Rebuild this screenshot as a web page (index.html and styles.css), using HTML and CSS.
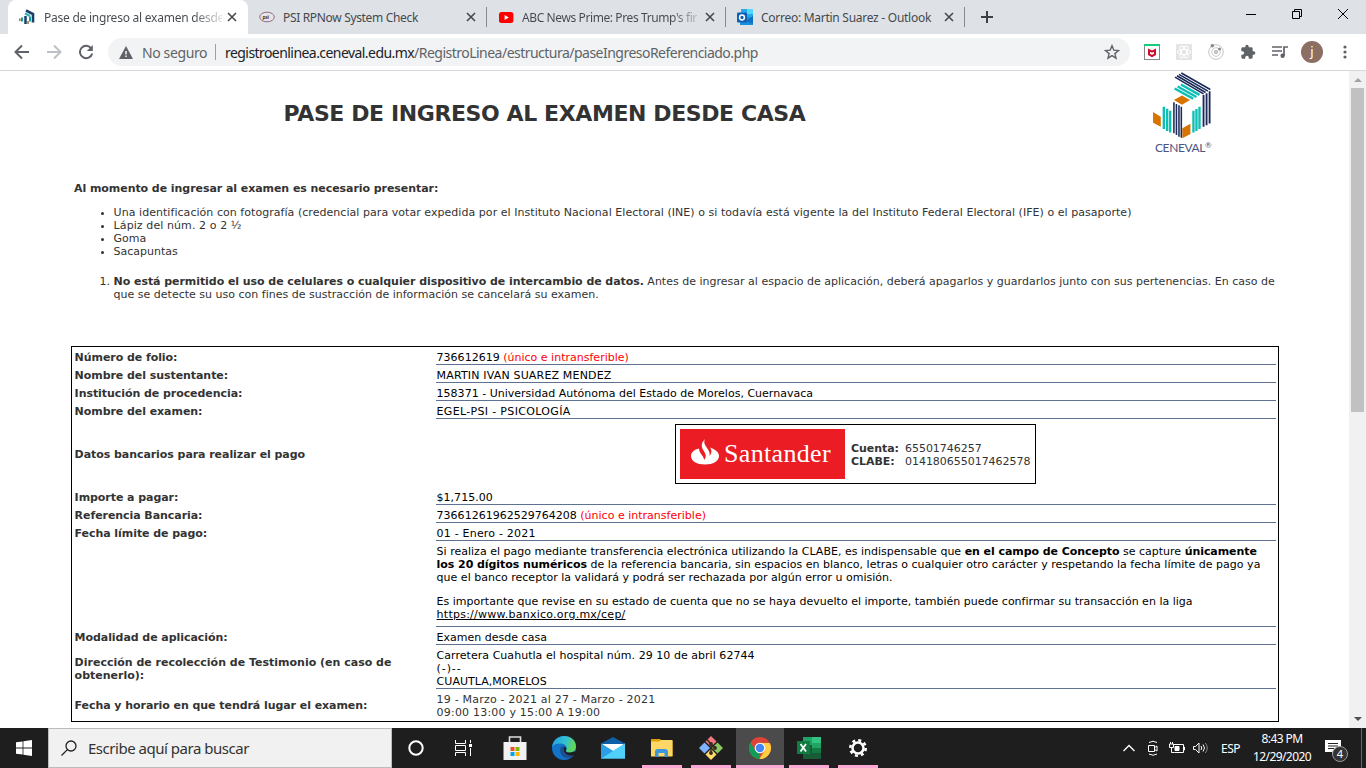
FILE: index.html
```html
<!DOCTYPE html>
<html lang="es">
<head>
<meta charset="utf-8">
<title>Pase de ingreso al examen desde casa</title>
<link rel="stylesheet" href="styles.css">
</head>
<body>
<div class="screen">
<header class="tabstrip">
  <div class="tab tab-active">
    <svg class="favicon" viewBox="0 0 16 16"><path d="M7 1.500L14 5v8.500" fill="none" stroke="#1b3f66" stroke-width="2.600"/><path d="M6 4.500l5 2.500" stroke="#2ab5b5" stroke-width="2"/><path d="M11 7.500v5M3 8.500v4" stroke="#0e9fa8" stroke-width="2"/><path d="M6.500 7v8" stroke="#1b3f66" stroke-width="2.500"/><path d="M.8 9.500v2.500M9 12v3" stroke="#a87a3c" stroke-width="1.600"/></svg>
    <span class="tab-title fade">Pase de ingreso al examen desde</span>
    <svg class="close" viewBox="0 0 10 10"><path d="M1 1l8 8M9 1l-8 8"/></svg>
  </div>
  <div class="tab tab-psi">
    <svg class="favicon" viewBox="0 0 16 16"><ellipse cx="8" cy="8" rx="7.300" ry="4.800" fill="#e9e4ea" stroke="#8b6d80"/><text x="3.500" y="10" class="psi-text">psi</text></svg>
    <span class="tab-title">PSI RPNow System Check</span>
    <svg class="close" viewBox="0 0 10 10"><path d="M1 1l8 8M9 1l-8 8"/></svg>
  </div>
  <div class="tab tab-yt">
    <svg class="favicon" viewBox="0 0 16 16"><rect x="1" y="3" width="14.400" height="11" rx="2.500" fill="#f00"/><path d="M6.600 6v5l4.200-2.500z" fill="#fff"/></svg>
    <span class="tab-title fade">ABC News Prime: Pres Trump's fir</span>
    <svg class="close" viewBox="0 0 10 10"><path d="M1 1l8 8M9 1l-8 8"/></svg>
  </div>
  <div class="tab tab-mail">
    <svg class="favicon" viewBox="0 0 16 16"><path d="M4 0h12v9H4z" fill="#28a8ea"/><path d="M10 0h6v5h-6z" fill="#50d9ff"/><path d="M4 4h6v5H4z" fill="#0364b8"/><path d="M3 8h13v8H3z" fill="#1490df"/><path d="M9 12l7-5v8z" fill="#0f6fc0"/><rect y="3.500" width="10" height="10" rx="1" fill="#0f5fb5"/><circle cx="5" cy="8.500" r="2.400" fill="none" stroke="#fff" stroke-width="1.500"/></svg>
    <span class="tab-title">Correo: Martin Suarez - Outlook</span>
    <svg class="close" viewBox="0 0 10 10"><path d="M1 1l8 8M9 1l-8 8"/></svg>
  </div>
  <svg class="newtab" viewBox="0 0 12 12"><path d="M6 0v12M0 6h12"/></svg>
  <div class="winbtns">
    <svg viewBox="0 0 12 12"><path d="M1 6.500h10"/></svg>
    <svg viewBox="0 0 12 12"><path d="M1.500 3.500h7v7h-7zM3.500 3.500v-2h7v7h-2"/></svg>
    <svg viewBox="0 0 12 12"><path d="M1 1l10 10M11 1L1 11"/></svg>
  </div>
</header>
<nav class="toolbar">
  <svg class="nav-ico" viewBox="0 0 16 16"><path d="M15 8H2M8 1.500L1.500 8L8 14.500"/></svg>
  <svg class="nav-ico off" viewBox="0 0 16 16"><path d="M1 8h13M8 1.500L14.500 8L8 14.500"/></svg>
  <svg class="nav-ico" viewBox="0 0 16 16"><path d="M13.300 4.500A6.200 6.200 0 1 0 14.200 9.500"/><path d="M14.800 1v6h-6z" class="solid"/></svg>
  <div class="omnibox">
    <svg class="warn" viewBox="0 0 14 13"><path d="M7 0l7 13H0z" fill="#5f6368"/><path d="M7 5v3.500M7 9.500v1.500" stroke="#fff" stroke-width="1.400"/></svg>
    <span class="unsafe">No seguro</span>
    <i class="bar"></i>
    <span class="url"><b>registroenlinea.ceneval.edu.mx</b>/RegistroLinea/estructura/paseIngresoReferenciado.php</span>
    <svg class="star" viewBox="0 0 16 16"><path d="M8 1.700l1.800 4.400 4.700.4-3.600 3.100 1.100 4.600L8 11.700l-4 2.500 1.100-4.600L1.500 6.500l4.700-.4z"/></svg>
  </div>
  <div class="exts">
    <svg viewBox="0 0 16 16"><rect x=".5" y=".5" width="15" height="15" fill="#fff" stroke="#888"/><path d="M0 0h16v2H0z" fill="#0fce7c"/><path d="M4 4.500l4 2 4-2v6.500l-4 2.300-4-2.300z" fill="#c8102e"/><path d="M6 7.800l2 1 2-1v2l-2 1-2-1z" fill="#fff"/></svg>
    <svg viewBox="0 0 16 16"><rect width="16" height="16" fill="#e4e4e4"/><g fill="none" stroke="#fff"><ellipse cx="8" cy="8" rx="6.500" ry="2.600"/><ellipse cx="8" cy="8" rx="6.500" ry="2.600" transform="rotate(60 8 8)"/><ellipse cx="8" cy="8" rx="6.500" ry="2.600" transform="rotate(120 8 8)"/></g></svg>
    <svg viewBox="0 0 16 16"><circle cx="8" cy="8" r="7.300" fill="none" stroke="#c4c4c4"/><circle cx="8" cy="8" r="4.300" fill="none" stroke="#ccc"/><circle cx="8" cy="8" r="2.200" fill="#c4c4c4"/><circle cx="4.300" cy="1.800" r="1.800" fill="#888"/><circle cx="11.500" cy="5" r="1.500" fill="#888"/></svg>
    <svg viewBox="0 0 24 24"><path fill="#5f6368" d="M20.500 11H19V7c0-1.100-.9-2-2-2h-4V3.500a2.500 2.500 0 0 0-5 0V5H4c-1.100 0-2 .9-2 2v3.800h1.500a2.700 2.700 0 0 1 0 5.400H2V20c0 1.100.9 2 2 2h3.800v-1.500a2.700 2.700 0 0 1 5.400 0V22H17c1.100 0 2-.9 2-2v-4h1.500a2.500 2.500 0 0 0 0-5z"/></svg>
    <svg viewBox="0 0 16 16"><path d="M0 3h10M0 7h10M0 11h6" stroke="#5f6368" stroke-width="1.700"/><circle cx="10.600" cy="11.800" r="2.200" fill="#5f6368"/><path d="M12 12V3h4" stroke="#5f6368" stroke-width="1.700" fill="none"/></svg>
  </div>
  <span class="avatar">j</span>
  <svg class="dots" viewBox="0 0 4 14"><circle cx="2" cy="2" r="1.600"/><circle cx="2" cy="7" r="1.600"/><circle cx="2" cy="12" r="1.600"/></svg>
</nav>
<div class="viewport">
<main class="page">
  <div class="head">
    <h1>PASE DE INGRESO AL EXAMEN DESDE CASA</h1>
    <div class="logo">
      <svg viewBox="450 215 190 205">
        <path class="navy" stroke-width="4.600" d="M543 221l86 49M536 225l86 50M530 229l85 50M524 233l85 50"/>
        <path class="teal" stroke-width="7" d="M542 255l55 31M532 261l56 31M523 267l55 30"/>
        <path class="orange" d="M545 288l24 13-24 14-24-14zM459 337l23 14v30l-23-12zM546 385l24-13v30l-24 13z"/>
        <path class="navy" stroke-width="5.500" d="M609 286v95M618 281v95M627 275v96"/>
        <path class="navy" stroke-width="4.600" d="M521 308v92M528.500 313v92M536 317v93M543 321v92"/>
        <path class="teal" stroke-width="7" d="M491 321v66M501 327v66M510 333v65M579 333v65M588 328v65M597 321v66"/>
      </svg>
      <span class="logo-name">CENEVAL<sup>®</sup></span>
    </div>
  </div>
  <p class="lead"><b>Al momento de ingresar al examen es necesario presentar:</b></p>
  <ul>
    <li class="id-item">Una identificación con fotografía (credencial para votar expedida por el Instituto Nacional Electoral (INE) o si todavía está vigente la del Instituto Federal Electoral (IFE) o el pasaporte)</li>
    <li class="pencil-item">Lápiz del núm. 2 o 2 ½</li>
    <li>Goma</li>
    <li>Sacapuntas</li>
  </ul>
  <ol>
    <li><b>No está permitido el uso de celulares o cualquier dispositivo de intercambio de datos.</b> Antes de ingresar al espacio de aplicación, deberá apagarlos y guardarlos junto con sus pertenencias. En caso de<br>que se detecte su uso con fines de sustracción de información se cancelará su examen.</li>
  </ol>
  <section class="sheet">
    <div class="row"><div class="lab">Número de folio:</div><div class="val">736612619 <em>(único e intransferible)</em></div></div>
    <div class="row"><div class="lab">Nombre del sustentante:</div><div class="val caps">MARTIN IVAN SUAREZ MENDEZ</div></div>
    <div class="row"><div class="lab">Institución de procedencia:</div><div class="val">158371 - Universidad Autónoma del Estado de Morelos, Cuernavaca</div></div>
    <div class="row"><div class="lab">Nombre del examen:</div><div class="val exam">EGEL-PSI - PSICOLOGÍA</div></div>
    <div class="row bank"><div class="lab">Datos bancarios para realizar el pago</div>
      <div class="val"><div class="bankbox">
        <div class="santander"><svg viewBox="0 0 28 26"><path d="M14 0c-2 4 .5 6.500 3 10.500 1.500 2.300 2 4 1.500 6.500 3-3.500 2-6.500.5-8.500 5 2 9 4.500 9 8.500 0 5-6 8.500-14 8.500S0 22 0 17c0-4 3.500-6.500 8-7.500 0 2 1 4 2.500 6 2 2.500 2.500 4 2.500 5.500 3-3.500 1.500-6.500-.5-9.500S9.500 4.500 14 0z" fill="#fff"/></svg><span>Santander</span></div>
        <dl><dt>Cuenta:</dt><dd>65501746257</dd><dt>CLABE:</dt><dd>014180655017462578</dd></dl>
      </div></div></div>
    <div class="row"><div class="lab">Importe a pagar:</div><div class="val">$1,715.00</div></div>
    <div class="row"><div class="lab">Referencia Bancaria:</div><div class="val">73661261962529764208 <em>(único e intransferible)</em></div></div>
    <div class="row"><div class="lab">Fecha límite de pago:</div><div class="val date">01 - Enero - 2021</div></div>
    <div class="row"><div class="lab"></div><div class="val notes">
      <p>Si realiza el pago mediante transferencia electrónica utilizando la CLABE, es indispensable que <b>en el campo de Concepto</b> se capture <b>únicamente</b><br><b>los 20 dígitos numéricos</b> de la referencia bancaria, sin espacios en blanco, letras o cualquier otro carácter y respetando la fecha límite de pago ya<br>que el banco receptor la validará y podrá ser rechazada por algún error u omisión.</p>
      <p>Es importante que revise en su estado de cuenta que no se haya devuelto el importe, también puede confirmar su transacción en la liga<br><u>https://www.banxico.org.mx/cep/</u></p></div></div>
    <div class="row"><div class="lab">Modalidad de aplicación:</div><div class="val">Examen desde casa</div></div>
    <div class="row"><div class="lab addr">Dirección de recolección de Testimonio (en caso de<br>obtenerlo):</div><div class="val place">Carretera Cuahutla el hospital núm. 29 10 de abril 62744<br><span class="dashes">(-)--</span><br>CUAUTLA,MORELOS</div></div>
    <div class="row last"><div class="lab">Fecha y horario en que tendrá lugar el examen:</div><div class="val date">19 - Marzo - 2021 al 27 - Marzo - 2021<br>09:00 13:00 y 15:00 A 19:00</div></div>
  </section>
</main>
<aside class="scroll"><i class="up"></i><i class="thumb"></i><i class="down"></i></aside>
</div>
<footer class="taskbar">
  <div class="start"><svg viewBox="0 0 16 16"><path d="M0 2.300L6.600 1.400v6.200H0zM7.400 1.300L16 0v7.600H7.400zM0 8.400h6.600v6.200L0 13.700zM7.400 8.400H16V16l-8.600-1.300z" fill="#fff"/></svg></div>
  <div class="search"><svg viewBox="0 0 16 16"><circle cx="10" cy="6" r="5"/><path d="M6.400 9.600L.5 15.500"/></svg><span>Escribe aquí para buscar</span></div>
  <div class="slot"><svg viewBox="0 0 24 24"><circle cx="12" cy="12" r="6.700" fill="none" stroke="#fff" stroke-width="2"/></svg></div>
  <div class="slot"><svg viewBox="0 0 24 24" fill="none" stroke="#fff"><path d="M3.500 4v3.500h10V4M3.500 20v-3.500h10V20M3.500 9.500h10v5h-10zM18.500 4v3M18.500 12v8"/><path d="M17 8h3v3h-3z" fill="#fff" stroke="none"/></svg></div>
  <div class="apps">
    <div class="slot"><svg viewBox="0 0 24 24"><path d="M6.500 7V1h11v6" fill="none" stroke="#ddd" stroke-width="1.600"/><path d="M.5 6h23v18H.5z" fill="#f2f2f2"/><path d="M7.500 11h4v4h-4z" fill="#f25022"/><path d="M12.500 11h4v4h-4z" fill="#7fba00"/><path d="M7.500 16h4v4h-4z" fill="#00a4ef"/><path d="M12.500 16h4v4h-4z" fill="#ffb900"/></svg></div>
    <div class="slot"><svg viewBox="0 0 24 24"><defs><linearGradient id="eg" x1="0" y1="0" x2="1" y2=".3"><stop offset="0" stop-color="#1b9de2"/><stop offset=".6" stop-color="#35c1d0"/><stop offset="1" stop-color="#5fd65a"/></linearGradient></defs><circle cx="12" cy="12" r="12" fill="#1273c9"/><path d="M0 11.500C.5 5 5.500 0 12 0c7 0 12 4.500 12 10.500 0 3.500-2.500 6-6.500 6-3 0-4-1-3.500-2 2-3-.5-7-5-7S.5 9 0 11.500z" fill="url(#eg)"/><path d="M9 11c-2 3.500-.5 9.500 5 11 4 .7 7-1 9-4-4 2-8.500 1-10-2.500-.7-1.700 0-3 .8-3.800C12 10 10 10 9 11z" fill="#1d4f93"/><path d="M12 11.500c2.500-1 2.500 1 2 3-.5 1.800 2.500 2.500 5.500 1.800 2-.3 4.500-1.300 4.500-.3l-1 3c-5 2-12.500-1-11-7.500z" fill="#1e1e1e"/></svg></div>
    <div class="slot"><svg viewBox="0 0 24 24"><path d="M0 7.500L12 1l12 6.500V15H0z" fill="#0f5ea8"/><path d="M2 8h20v9H2z" fill="#fff"/><path d="M0 7.500L12 15l12-7.500V22.500H0z" fill="#35b8f1"/><path d="M24 7.500L0 22.500h24z" fill="#50d0fb"/><path d="M0 7.500v15L12 15z" fill="#2a9fe8"/></svg></div>
    <div class="slot open"><svg viewBox="0 0 24 24"><path d="M1 3h9l2 2H22.500v15H1z" fill="#e0a000"/><path d="M1 5.500h8l2-1.500h11.500v16.500H1z" fill="#ffd766"/><path d="M5 21v-5q0-3 3-3h7q3 0 3 3v5h-3.500v-4h-6v4z" fill="#3a96dd"/></svg></div>
    <div class="slot open"><svg viewBox="0 0 24 24"><path d="M12 0l5.500 5.500L12 11 6.500 5.500z" fill="#f4777c"/><path d="M5.500 6.500L11 12l-5.500 5.500L0 12z" fill="#80b3ff"/><path d="M18.500 6.500L24 12l-5.500 5.500L13 12z" fill="#8cc85f"/><path d="M12 13l5.500 5.500L12 24l-5.500-5.500z" fill="#ffdc6b"/><path d="M8 3.500l4 4.500v10M12 8l4 4" fill="none" stroke="#362a22" stroke-width="1.500"/><circle cx="12" cy="8" r="1.900" fill="#362a22"/><circle cx="16" cy="12" r="1.900" fill="#362a22"/><circle cx="12" cy="17" r="1.900" fill="#362a22"/></svg></div>
    <div class="slot open wide"><svg viewBox="0 0 24 24"><circle cx="12" cy="12" r="11" fill="#db4437"/><path d="M2.500 6.500L7.500 15 12 17 11.300 23A11 11 0 0 1 2.500 6.500z" fill="#0f9d58"/><path d="M12 7h9.800A11 11 0 0 1 11.300 23L17 14z" fill="#ffcd40"/><circle cx="12" cy="12" r="5.300" fill="#fff"/><circle cx="12" cy="12" r="4.200" fill="#4285f4"/></svg></div>
    <div class="slot open"><svg viewBox="0 0 24 24"><path d="M6 1h18v22H6z" fill="#185c37"/><path d="M6 1h9v8H6z" fill="#21a366"/><path d="M15 1h9v6h-9z" fill="#33c481"/><path d="M15 7h9v5h-9z" fill="#21a366"/><path d="M15 12h9v5h-9z" fill="#107c41"/><path d="M0 5h13v13H0z" fill="#107c41"/><path d="M3.500 8l5.500 7.500M9 8l-5.500 7.500" stroke="#fff" stroke-width="1.800"/></svg></div>
    <div class="slot open"><svg viewBox="0 0 24 24" fill="none" stroke="#fff"><circle cx="12" cy="12" r="5.500" stroke-width="2.500"/><circle cx="12" cy="12" r="7.700" stroke-width="2.600" stroke-dasharray="3 3.047"/></svg></div>
  </div>
  <div class="tray">
    <svg viewBox="0 0 16 16"><path d="M2.500 11l5.500-5.500 5.500 5.500" stroke-width="1.300"/></svg>
    <svg viewBox="0 0 16 16"><path d="M3.500 5.500h6v6h-6zM9.500 7.500l2.500-1.500v5L9.500 9.500M4 2.500q4-2.500 8 0M4 14q4 2.500 8 0"/></svg>
    <svg viewBox="0 0 16 16"><path d="M4.500 4.500h10v8h-9M14.500 7h1v3h-1M.5 4h4v3.500h-4zM1.500 4V2M3.500 4V2M2.500 7.500v5h3"/><path d="M6 6.500h4v4H6z" fill="#fff"/></svg>
    <svg viewBox="0 0 16 16"><path d="M.5 6.500h2L6 3v10L2.500 9.500h-2zM8 6q1.500 2 0 4M10 4.500q3 3.500 0 7"/><path d="M12.300 3q4 5 0 10" stroke="#888"/></svg>
    <span class="lang">ESP</span>
    <span class="clock">8:43 PM<br>12/29/2020</span>
    <div class="notif"><svg viewBox="0 0 16 16"><path d="M0 0h16v12h-6l-3 3v-3H0z" fill="#fff" stroke="none"/><path d="M3 3.500h10M3 6h10M3 8.500h6" stroke="#222"/></svg><span class="badge">4</span></div>
    <i class="peek"></i>
  </div>
</footer>
</div>
</body>
</html>
```
FILE: styles.css
```css
*{box-sizing:border-box}
body{margin:0;overflow:hidden;background:#fff}
.screen{width:1366px;height:768px;display:flex;flex-direction:column;font-family:"Noto Sans","Open Sans",sans-serif;white-space:nowrap}
svg{display:block;flex:none}
.tabstrip{height:34px;background:#dee1e6;display:flex;align-items:center;padding-left:8px;flex:none}
.tab{height:34px;display:flex;align-items:center;width:239px;padding-left:11px;font-size:12px;color:#45494d;letter-spacing:-.33px}
.tab-active{background:#fff;width:240px;border-radius:8px 8px 0 0;letter-spacing:-.24px}
.tab-active .tab-title{margin-left:1px}
.tab-psi,.tab-yt,.tab-mail{background:linear-gradient(#878b90,#878b90) right center/1px 20px no-repeat}
.tab-yt{letter-spacing:-.4px}
.tab-mail{letter-spacing:-.27px}
.favicon{width:16px;height:16px;margin-right:8px}
.tab-title{flex:1}
.fade{color:transparent;background:linear-gradient(90deg,#45494d 84%,rgba(69,73,77,.15) 100%);-webkit-background-clip:text;background-clip:text;min-width:0}
.close{width:10px;height:10px;margin:0 11px 0 5px}
.close path{stroke:#45494d;stroke-width:1.6}
.newtab{width:12px;height:12px;margin-left:16px}
.newtab path{stroke:#3c4043;stroke-width:2}
.psi-text{font:bold 5px "Noto Sans",sans-serif;fill:#444}
.winbtns{margin-left:auto;display:flex;gap:34px;padding:0 17px 6px 0}
.winbtns svg{width:12px;height:12px}
.winbtns path{fill:none;stroke:#000}
.toolbar{height:37px;border-bottom:1px solid #d5d7da;background:#fff;display:flex;align-items:center;padding-left:14px;flex:none}
.nav-ico{width:16px;height:16px;margin-right:16px;fill:none;stroke:#5f6368;stroke-width:2}
.solid{fill:#5f6368;stroke:none}
.off{stroke:#bdc1c6}
.omnibox{width:1022px;height:28px;border-radius:14px;background:#f1f3f4;display:flex;align-items:center;padding:0 10px 0 11px;margin-left:-2px;font-size:14px;color:#5f6368;letter-spacing:-.52px}
.warn{width:14px;height:13px;margin-right:9px}
.unsafe{width:73px;letter-spacing:-.38px}
.bar{width:1px;height:16px;background:#9aa0a6;margin-right:9px}
.url{flex:1}
.url b{font-weight:400;color:#202124;letter-spacing:-.56px}
.star{width:16px;height:16px;fill:none;stroke:#5f6368;stroke-width:1.4}
.exts{display:flex;gap:16px;margin-left:14px}
.exts svg{width:16px;height:16px}
.avatar{width:22px;height:22px;border-radius:50%;background:#8d6e63;color:#fff;font-size:13px;line-height:20px;text-align:center;margin-left:13px}
.dots{width:4px;height:14px;margin-left:20px;fill:#5f6368}
.viewport{height:657px;display:flex;overflow:hidden}
.page{width:1349px;padding:0 70px 0 71px;font:11px/13px "DejaVu Sans",sans-serif;color:#333}
.page b,.lab,dt{letter-spacing:-.06px}
.head{display:flex;height:111px}
h1{margin:0;width:947px;font-size:22px;line-height:28px;padding-top:29px;text-align:center;letter-spacing:-.4px}
.logo{margin-left:132px}
.logo svg{width:64px;height:69px}
.navy{stroke:#1b2a59;fill:none}
.teal{stroke:#0dbfb5;fill:none}
.orange{fill:#d97300}
.logo-name{display:flex;padding:1px 0 0 5px;font:12px/13px Lato,sans-serif;color:#4a5580;letter-spacing:-.4px}
sup{font-size:8px;line-height:8px}
p{margin:0}
.lead{padding-left:3px}
ul,ol{margin:11px 0 0;padding-left:42.6px}
.id-item{letter-spacing:.047px}
.pencil-item{letter-spacing:.09px}
ol{margin-top:17px}
ol li{letter-spacing:.006px}
.sheet{margin-top:45px;border:1px solid #000;height:376px;width:1208px}
.row{display:grid;grid-template-columns:364px 840px}
.lab{font-weight:700;align-self:center;padding:2px 0 0 2.6px}
.addr{letter-spacing:0;padding-top:3px}
.val{padding:4px 0 0 .6px;border-bottom:1px solid #5f7191;color:#000;letter-spacing:.01px}
.caps{letter-spacing:.17px}
.exam{letter-spacing:.33px}
.date{letter-spacing:.2px}
.place{letter-spacing:.04px}
.dashes{letter-spacing:.9px}
em{font-style:normal;color:red}
.bank{height:68px}
.bank .val{border:0;padding:5px 0 0;display:flex;justify-content:center;color:#333}
.bankbox{border:1px solid #000;width:361px;height:60px;padding:4px;display:flex;align-items:center;margin-right:1px}
.santander{width:165px;height:50px;background:#ec1c24;display:flex;align-items:center;padding-left:11px;gap:5px;color:#fff;font:26px/50px "Liberation Serif",serif;letter-spacing:.33px}
.santander svg{width:28px;height:26px;margin-bottom:4px}
dl{margin:2px 0 0 6px;display:grid;grid-template-columns:54px auto}
dt{font-weight:700}
dd{margin:0;letter-spacing:-.03px}
.notes{padding-bottom:5px}
.notes p+p{margin-top:11px}
.notes u{letter-spacing:.25px}
.last .val{border:0;color:#333}
.scroll{width:17px;background:#f1f1f1;display:flex;flex-direction:column;align-items:center}
.up{border:4px solid transparent;border-top:0;border-bottom:4px solid #a3a3a3;margin:7px 0 6px}
.thumb{width:13px;height:324px;background:#c1c1c1}
.down{border:4px solid transparent;border-bottom:0;border-top:4px solid #505050;margin:auto 0 7px}
.taskbar{height:40px;background:#1e1e1e;display:flex;flex:none;color:#fff}
.start{width:48px;padding:12px 16px}
.start svg{width:16px;height:16px}
.search{width:344px;background:#f1f1f1;border:1px solid #bbb;display:flex;align-items:center;padding-left:12px;gap:11px;font-size:15px;color:#333;letter-spacing:-.48px}
.search svg{width:16px;height:16px;fill:none;stroke:#222;stroke-width:1.300}
.slot{width:48px;height:40px;display:flex;justify-content:center;align-items:center}
.slot svg{width:24px;height:24px}
.apps{display:flex;gap:1px;margin-left:3px}
.open{background:linear-gradient(#f9a8d4,#f9a8d4) center bottom/40px 3px no-repeat}
.wide{background-color:#4b4b4b;background-size:48px 3px}
.tray{margin-left:auto;display:flex;align-items:center;gap:8px;font-size:12px;letter-spacing:-.5px}
.tray svg{width:16px;height:16px;fill:none;stroke:#fff}
.lang{padding-left:4px}
.clock{width:60px;margin:0 1px 0 4px;text-align:center;line-height:18px;letter-spacing:-.6px}
.notif{position:relative;margin-left:4px}
.notif .badge{letter-spacing:0}
.badge{position:absolute;left:7px;top:6px;width:16px;height:16px;border:1px solid #999;border-radius:50%;background:#333;font-size:11px;line-height:14px;text-align:center}
.peek{width:1px;height:40px;background:#666;margin:0 4px 0 12px}
```
